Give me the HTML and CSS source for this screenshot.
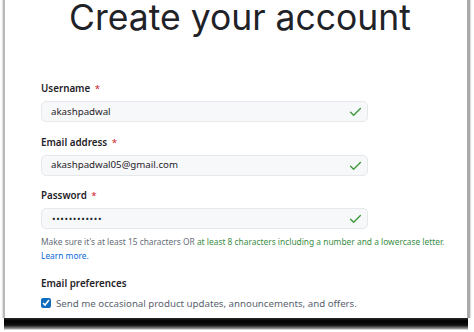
FILE: index.html
```html
<!DOCTYPE html>
<html lang="en">
<head>
<meta charset="utf-8">
<title>Create your account</title>
<link rel="stylesheet" href="styles.css">
</head>
<body>
<div class="page">
  <div class="frame">
    <h1 class="title">Create your account</h1>
    <form class="form">
      <div class="field">
        <label class="label">Username <span class="req">*</span></label>
        <div class="input">
          <span class="value">akashpadwal</span>
          <svg class="ok" viewBox="0 0 16 16" width="15" height="15"><path d="M13.78 4.22a.75.75 0 0 1 0 1.06l-7.25 7.25a.75.75 0 0 1-1.06 0L2.220 9.28a.751.751 0 0 1 .018-1.042.751.751 0 0 1 1.042-.018L6 10.94l6.720-6.72a.75.75 0 0 1 1.06 0Z"/></svg>
        </div>
      </div>
      <div class="field">
        <label class="label">Email address <span class="req">*</span></label>
        <div class="input">
          <span class="value">akashpadwal05@gmail.com</span>
          <svg class="ok" viewBox="0 0 16 16" width="15" height="15"><path d="M13.78 4.22a.75.75 0 0 1 0 1.06l-7.25 7.25a.75.75 0 0 1-1.06 0L2.220 9.28a.751.751 0 0 1 .018-1.042.751.751 0 0 1 1.042-.018L6 10.94l6.720-6.72a.75.75 0 0 1 1.06 0Z"/></svg>
        </div>
      </div>
      <div class="field">
        <label class="label">Password <span class="req">*</span></label>
        <div class="input">
          <span class="value dots">&bull;&bull;&bull;&bull;&bull;&bull;&bull;&bull;&bull;&bull;&bull;&bull;</span>
          <svg class="ok" viewBox="0 0 16 16" width="15" height="15"><path d="M13.78 4.22a.75.75 0 0 1 0 1.06l-7.25 7.25a.75.75 0 0 1-1.06 0L2.220 9.28a.751.751 0 0 1 .018-1.042.751.751 0 0 1 1.042-.018L6 10.94l6.720-6.72a.75.75 0 0 1 1.06 0Z"/></svg>
        </div>
        <p class="hint">Make sure it's at least 15 characters OR <span class="good">at least 8 characters including a number and a lowercase letter.</span><br><a class="link" href="#">Learn more.</a></p>
      </div>
      <div class="prefs">
        <div class="label">Email preferences</div>
        <label class="check"><input type="checkbox" checked> <span>Send me occasional product updates, announcements, and offers.</span></label>
      </div>
    </form>
  </div>
  <div class="bottom"></div>
</div>
</body>
</html>
```

FILE: styles.css
```css
* { box-sizing: border-box; }
html, body { margin: 0; padding: 0; background: #fff; }
body { width: 474px; height: 332px; overflow: hidden; font-family: "Noto Sans", "Open Sans", sans-serif; color: #1f2328; }

.page { display: flex; flex-direction: column; padding-left: 3px; width: 470px; }

.frame {
  height: 318px;
  background: #fff;
  border-left: 2px solid #b9b9b9;
  border-right: 3px solid #a9a9a9;
  box-shadow: -1px 0 1px #e2e2e2, 1px 0 1px #dedede;
}

.bottom {
  height: 12px;
  background: linear-gradient(#2a2a2a 0, #000 25%, #111 60%, #9a9a9a 90%, #fff 100%);
  margin: 0 2px 0 1px;
}

.title {
  margin: 0;
  padding-left: 64px;
  font-family: Inter, "Noto Sans", sans-serif;
  font-weight: 400;
  font-size: 35.5px;
  line-height: 35px;
  color: #1f2328;
}

.form { padding: 47px 0 0 36px; }

.field { margin-bottom: 13.5px; }

.label {
  display: block;
  font-size: 9.8px;
  font-weight: 600;
  line-height: 14px;
  margin-bottom: 5px;
  color: #1f2328;
}
.req { color: #cf222e; font-weight: 400; margin-left: 2px; }

.input {
  width: 327px;
  height: 21px;
  border: 1px solid #e6e8eb;
  border-radius: 5px;
  background: #f7f8fa;
  display: flex;
  align-items: center;
  justify-content: space-between;
  padding: 0 4px 0 9px;
}
.value { font-size: 9.7px; color: #1f2328; line-height: 14px; }
.dots { font-size: 9.5px; letter-spacing: 0.6px; padding-left: 1px; }
.ok { fill: #3f9a3a; }

.hint {
  margin: 6px 0 0;
  font-size: 8.4px;
  line-height: 14px;
  color: #656d76;
  white-space: nowrap;
}
.good { color: #3a8d46; }
.link { color: #0969da; text-decoration: none; }

.prefs { margin-top: 12px; }
.prefs .label { margin-bottom: 6px; }

.check { display: flex; align-items: center; gap: 5px; font-size: 9.7px; color: #59636e; }
.check input { margin: 0; width: 10px; height: 10px; accent-color: #0f6cbd; }
```
